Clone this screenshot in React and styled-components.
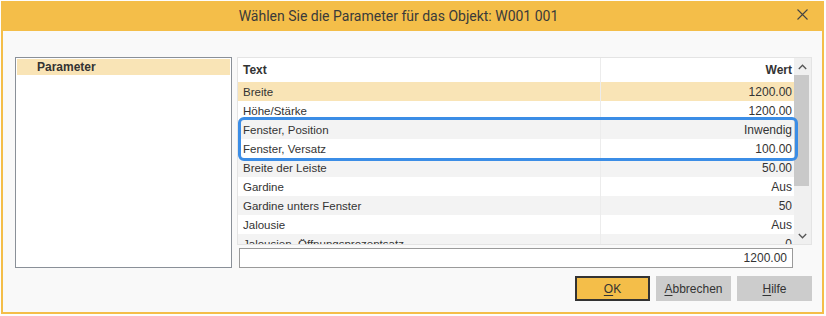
import React from 'react'
import styled, { createGlobalStyle } from 'styled-components'

const rows = [
  { txt: 'Breite', val: '1200.00' },
  { txt: 'Höhe/Stärke', val: '1200.00' },
  { txt: 'Fenster, Position', val: 'Inwendig' },
  { txt: 'Fenster, Versatz', val: '100.00' },
  { txt: 'Breite der Leiste', val: '50.00' },
  { txt: 'Gardine', val: 'Aus' },
  { txt: 'Gardine unters Fenster', val: '50' },
  { txt: 'Jalousie', val: 'Aus' },
  { txt: 'Jalousien, Öffnungsprozentsatz', val: '0' },
]

function App() {
  return (
    <>
      <Global />
      <Window>
        <TitleBar>
          <Title>Wählen Sie die Parameter für das Objekt: W001 001</Title>
          <Close>
            <svg width="11" height="11" viewBox="0 0 11 11">
              <path d="M0.5 0.5 L10.5 10.5 M10.5 0.5 L0.5 10.5" stroke="#444" strokeWidth="1.1" fill="none" />
            </svg>
          </Close>
        </TitleBar>
        <Body>
          <Content>
            <Tree>
              <TreeHead>Parameter</TreeHead>
            </Tree>
            <Right>
              <Grid>
                <Table>
                  <Row head>
                    <Cell bold>Text</Cell>
                    <ValCell bold>Wert</ValCell>
                  </Row>
                  {rows.map((r, i) => (
                    <Row key={r.txt} selected={i === 0} odd={i % 2 === 1}>
                      <Cell>{r.txt}</Cell>
                      <ValCell>{r.val}</ValCell>
                    </Row>
                  ))}
                </Table>
                <Scrollbar>
                  <Arrow>
                    <svg width="9" height="6" viewBox="0 0 9 6">
                      <path d="M0.8 5 L4.5 1.2 L8.2 5" stroke="#555" strokeWidth="1.3" fill="none" />
                    </svg>
                  </Arrow>
                  <Track>
                    <Thumb />
                  </Track>
                  <Arrow>
                    <svg width="9" height="6" viewBox="0 0 9 6">
                      <path d="M0.8 1 L4.5 4.8 L8.2 1" stroke="#555" strokeWidth="1.3" fill="none" />
                    </svg>
                  </Arrow>
                </Scrollbar>
                <Focus />
              </Grid>
              <Input>1200.00</Input>
            </Right>
          </Content>
          <Buttons>
            <Button primary><u>O</u>K</Button>
            <Button><u>A</u>bbrechen</Button>
            <Button><u>H</u>ilfe</Button>
          </Buttons>
        </Body>
      </Window>
    </>
  )
}

export default App

const Global = createGlobalStyle`
body {
  margin: 0;
  background: #fdfdfd;
  font-family: "Liberation Sans", Arial, sans-serif;
  color: #333;
}
`

const Window = styled.div`
margin: 1px 0 0 1px;
width: 823px;
height: 313px;
box-sizing: border-box;
border: 2px solid #f4be49;
border-top: none;
display: flex;
flex-direction: column;
background: #f9f9f9;
`

const TitleBar = styled.div`
height: 30px;
margin: 0 -2px;
background: #f4be49;
display: flex;
align-items: center;
justify-content: center;
position: relative;
`

const Title = styled.div`
font-family: Roboto, sans-serif;
font-size: 14px;
color: #3a3a3a;
padding-right: 28px;
`

const Close = styled.div`
position: absolute;
right: 16px;
top: 8px;
width: 11px;
height: 11px;
display: flex;
`

const Body = styled.div`
flex: 1;
display: flex;
flex-direction: column;
padding: 26px 10px 11px 12px;
gap: 8px;
`

const Content = styled.div`
display: flex;
gap: 5px;
height: 211px;
`

const Tree = styled.div`
width: 217px;
box-sizing: border-box;
border: 1px solid #8a9098;
background: #fff;
padding: 1px;
`

const TreeHead = styled.div`
height: 16px;
background: #f9e4b6;
font-weight: bold;
font-size: 12px;
line-height: 16px;
padding-left: 20px;
color: #333;
`

const Right = styled.div`
flex: 1;
display: flex;
flex-direction: column;
gap: 3px;
`

const Grid = styled.div`
height: 188px;
box-sizing: border-box;
border: 1px solid #e4e4e4;
background: #fff;
display: flex;
position: relative;
`

const Table = styled.div`
flex: 1;
overflow: hidden;
`

const Row = styled.div`
display: flex;
height: ${p => (p.head ? '24px' : '19px')};
align-items: center;
background: ${p => (p.selected ? '#f9e4b6' : p.head || p.odd ? '#fff' : '#f3f3f3')};
font-size: 11.5px;
`

const Cell = styled.div`
width: 357px;
padding-left: 5px;
font-weight: ${p => (p.bold ? 'bold' : 'normal')};
font-size: ${p => (p.bold ? '12px' : '11.5px')};
white-space: nowrap;
`

const ValCell = styled.div`
flex: 1;
align-self: stretch;
display: flex;
align-items: center;
justify-content: flex-end;
padding-right: 2px;
border-left: 1px solid #ececec;
font-weight: ${p => (p.bold ? 'bold' : 'normal')};
font-size: 12px;
`

const Scrollbar = styled.div`
width: 17px;
background: #f0f0f0;
display: flex;
flex-direction: column;
`

const Arrow = styled.div`
height: 17px;
display: flex;
align-items: center;
justify-content: center;
`

const Track = styled.div`
flex: 1;
`

const Thumb = styled.div`
height: 111px;
width: 15px;
background: #c9c9c9;
`

const Focus = styled.div`
position: absolute;
left: 0;
top: 59px;
right: 13px;
height: 38px;
border: 3px solid #3b8de6;
border-radius: 6px;
pointer-events: none;
`

const Input = styled.div`
height: 20px;
margin: 0 19px 0 2px;
box-sizing: border-box;
border: 1px solid #9a9a9a;
background: #fff;
font-size: 12px;
display: flex;
align-items: center;
justify-content: flex-end;
padding-right: 5px;
`

const Buttons = styled.div`
display: flex;
justify-content: flex-end;
gap: 6px;
`

const Button = styled.div`
width: 75px;
height: 25px;
box-sizing: border-box;
display: flex;
align-items: center;
justify-content: center;
font-size: 12px;
color: #333;
background: ${p => (p.primary ? '#f4be49' : '#cccccc')};
border: ${p => (p.primary ? '2px solid #333' : 'none')};
u { text-underline-offset: 2px; }
`
